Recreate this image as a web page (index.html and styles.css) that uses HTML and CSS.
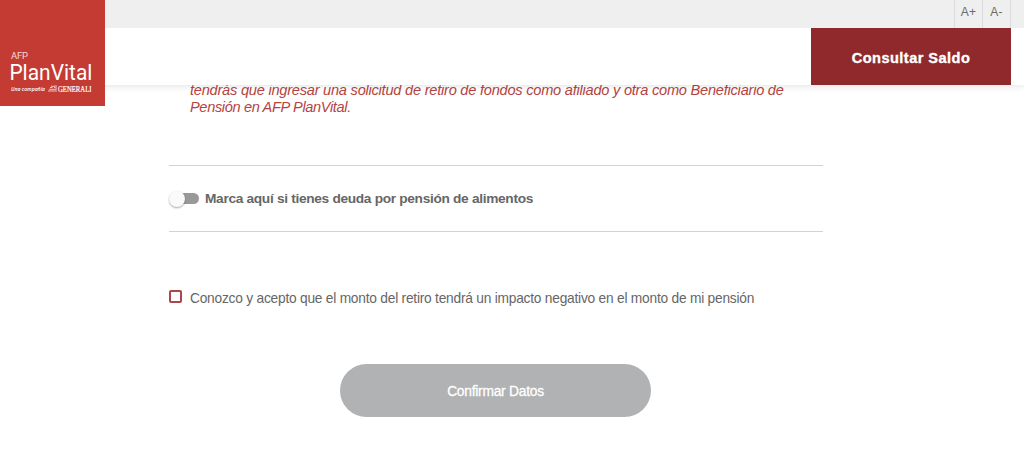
FILE: index.html
```html
<!DOCTYPE html>
<html lang="es">
<head>
<meta charset="utf-8">
<title>AFP PlanVital</title>
<link rel="stylesheet" href="styles.css">
</head>
<body>
<header class="header">
  <div class="topbar">
    <button class="size-btn">A+</button>
    <button class="size-btn">A-</button>
  </div>
  <div class="navbar">
    <a class="balance">Consultar Saldo</a>
  </div>
  <a class="logo" aria-label="AFP PlanVital">
    <svg width="105" height="106" viewBox="0 0 105 106">
      <g fill="#fff">
        <text class="logo-afp" x="11" y="59" textLength="17">AFP</text>
        <text class="logo-name" x="9.4" y="80.3" textLength="83" lengthAdjust="spacingAndGlyphs">PlanVital</text>
        <text class="logo-tag" x="11" y="91" textLength="34" lengthAdjust="spacingAndGlyphs">Una compañía</text>
        <text class="logo-brand" x="58" y="91.7" textLength="33.5" lengthAdjust="spacingAndGlyphs">GENERALI</text>
      </g>
      <path d="M48 91h9M49 89.3h7.5M50 87.5h2.5M54 87.4l3 .8M51 86l2 .5 2-.5 2 .2" fill="none" stroke="#fff" stroke-width=".85" opacity=".85"/>
    </svg>
  </a>
</header>
<main class="content">
  <p class="notice"><span class="line line-a">tendrás que ingresar una solicitud de retiro de fondos como afiliado y otra como Beneficiario de</span> <span class="line line-b">Pensión en AFP PlanVital.</span></p>
  <section class="debt">
    <span class="switch"><span class="knob"></span></span>
    <span class="debt-label">Marca aquí si tienes deuda por pensión de alimentos</span>
  </section>
  <label class="accept">
    <span class="box"></span>
    <span class="accept-label">Conozco y acepto que el monto del retiro tendrá un impacto negativo en el monto de mi pensión</span>
  </label>
  <button class="confirm">Confirmar Datos</button>
</main>
</body>
</html>
```
FILE: styles.css
```css
* { box-sizing: border-box; }
body {
  margin: 0;
  height: 451px;
  overflow: hidden;
  background: #fff;
  color: #666;
  font-family: "Liberation Sans", Arial, sans-serif;
}
button { border: 0; padding: 0; font-family: inherit; }
.header {
  position: relative;
  z-index: 2;
  height: 85px;
  background: #fff;
  box-shadow: 0 1px 7px rgba(0, 0, 0, .12);
}
.topbar {
  display: flex;
  justify-content: flex-end;
  height: 28px;
  padding-right: 13px;
  background: #efefef;
}
.size-btn {
  width: 28px;
  padding-bottom: 4px;
  border-left: 1px solid #dcdcdc;
  background: none;
  color: #6b6b6b;
  font-size: 12px;
  letter-spacing: .2px;
}
.size-btn:last-child { width: 29px; border-right: 1px solid #dcdcdc; }
.navbar { display: flex; justify-content: flex-end; height: 57px; padding-right: 13px; }
.balance {
  display: flex;
  align-items: center;
  justify-content: center;
  width: 200px;
  padding-top: 2px;
  background: #8f292b;
  color: #fff;
  font-size: 14.6px;
  font-weight: 700;
  letter-spacing: .45px;
  -webkit-text-stroke: .35px #fff;
}
.logo { position: absolute; top: 0; left: 0; width: 105px; height: 106px; background: #c33b32; }
.logo svg { display: block; }
.logo-afp { font: 9.5px Roboto, sans-serif; opacity: .8; }
.logo-name { font: 22px Roboto, sans-serif; }
.logo-tag { font: italic 600 5.5px "Open Sans", sans-serif; }
.logo-brand { font: 7.6px "Liberation Serif", serif; stroke: #fff; stroke-width: .2px; }
.content { width: 654px; margin: -4px 0 0 169px; }
.notice {
  margin: 0;
  padding: 1px 0 0 21px;
  height: 88px;
  color: #b5443f;
  font-size: 14.6px;
  font-style: italic;
  line-height: 17px;
}
.line { display: block; white-space: nowrap; }
.line-a { letter-spacing: -.23px; }
.line-b { letter-spacing: -.36px; }
.debt {
  display: flex;
  align-items: center;
  height: 67px;
  margin-top: -4px;
  border-top: 1px solid #d2d2d2;
  border-bottom: 1px solid #d2d2d2;
}
.switch {
  display: flex;
  align-items: center;
  width: 28px;
  height: 11px;
  margin: 0 6px 0 2px;
  border-radius: 6px;
  background: #999;
}
.knob {
  flex: none;
  width: 16px;
  height: 16px;
  margin-left: -2px;
  border-radius: 50%;
  background: #fafafa;
  box-shadow: 0 1px 2px rgba(0, 0, 0, .35);
}
.debt-label { font-size: 13.7px; font-weight: 700; letter-spacing: -.31px; white-space: nowrap; }
.accept { display: flex; align-items: center; margin-top: 58px; height: 17px; }
.box { width: 13px; height: 13px; margin: -4px 8px 0 0; border: 2px solid #a9484a; border-radius: 2px; }
.accept-label { font-size: 13.75px; letter-spacing: -.23px; white-space: nowrap; }
.confirm {
  display: block;
  width: 311px;
  height: 53px;
  margin: 57px 0 0 171px;
  padding-top: 2px;
  border-radius: 27px;
  background: #b1b2b3;
  color: #fff;
  font-size: 13.8px;
  letter-spacing: -.25px;
  -webkit-text-stroke: .3px #fff;
}
```
